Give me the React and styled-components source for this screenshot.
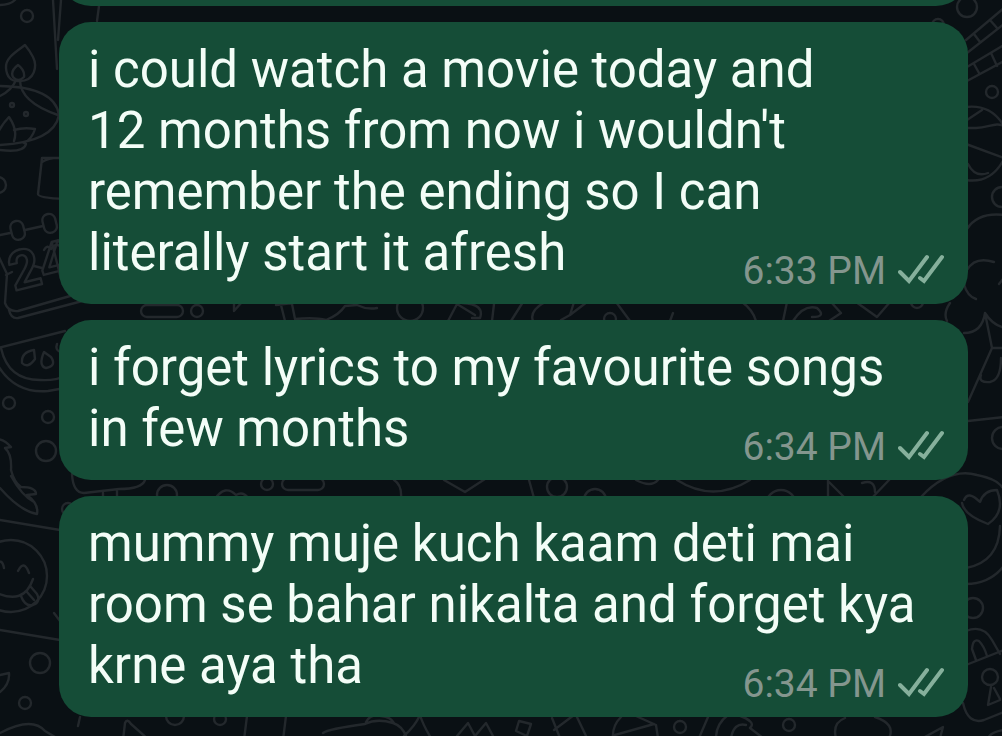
import React from "react";
import styled, { createGlobalStyle } from "styled-components";

const GlobalStyle = createGlobalStyle`
  * { box-sizing: border-box; }
  body { margin: 0; background: #0a1014; }
`;

const Screen = styled.main`
  position: relative;
  display: flex;
  flex-direction: column;
  justify-content: flex-end;
  height: 100vh;
  overflow: hidden;
  background: #0a1014;
  font-family: Roboto, "Liberation Sans", sans-serif;
`;

const Doodles = styled.svg`
  position: absolute;
  top: 0;
  left: 0;
  width: 100%;
  height: 100%;
  fill: none;
  stroke: #23282c;
  stroke-width: 2.4;
  stroke-linecap: round;
  stroke-linejoin: round;
`;

const Thread = styled.ol`
  position: relative;
  display: flex;
  flex-direction: column;
  flex-shrink: 0;
  gap: 16px;
  margin: 0;
  padding: 0 34px 19px 59px;
  list-style: none;
`;

const Bubble = styled.li`
  min-height: 100px;
  padding: 17px 24px 21px 29px;
  border-radius: 32px;
  background: #154d37;
  color: #f3fdf7;
  font-size: 51px;
  line-height: 61px;
`;

const Line = styled.div`
  white-space: nowrap;
`;

const LastRow = styled.div`
  display: flex;
  align-items: flex-start;
  justify-content: space-between;
  height: 61px;
`;

const Meta = styled.div`
  display: flex;
  align-items: center;
  gap: 12px;
  margin-top: 26px;
  color: #84968e;
  font-size: 39px;
  line-height: 46px;
`;

const Ticks = styled.svg`
  width: 46px;
  height: 30px;
  margin-bottom: 4px;
  fill: none;
  stroke: #86b09c;
  stroke-width: 4;
  stroke-linecap: round;
`;

const messages = [
  {
    lines: [
      "i could watch a movie today and",
      "12 months from now i wouldn't",
      "remember the ending so I can",
      "literally start it afresh",
    ],
    time: "6:33 PM",
  },
  {
    lines: ["i forget lyrics to my favourite songs", "in few months"],
    time: "6:34 PM",
  },
  {
    lines: [
      "mummy muje kuch kaam deti mai",
      "room se bahar nikalta and forget kya",
      "krne aya tha",
    ],
    time: "6:34 PM",
  },
];

const rings = [
  [27, 16, 6], [12, 105, 2], [26, 114, 2], [-2, 185, 8],
  [9, 403, 6], [48, 417, 6], [46, 451, 10],
  [40, 663, 10], [25, 703, 6], [68, 509, 6],
  [967, 7, 10], [992, 92, 6], [1002, 197, 10], [1003, 438, 11],
  [973, 608, 10], [197, 311, 6], [410, 308, 13], [167, 495, 10],
  [267, 484, 6], [557, 487, 10], [610, 319, 6], [595, 500, 11],
  [781, 505, 15], [680, 727, 6], [789, 725, 6], [938, 25, 6],
  [175, 716, 9], [220, 719, 6], [917, 302, 6],
];

function Wallpaper() {
  return (
    <Doodles viewBox="0 0 1002 736" preserveAspectRatio="xMinYMin slice" aria-hidden="true">
      {rings.map(([x, y, r]) => (
        <circle key={`${x}-${y}`} cx={x} cy={y} r={r} />
      ))}

      {/* oil lamp */}
      <path d="M25 45 C17 51 5 58 6 68 Q7 81 18 81 C36 82 37 65 33 57 Q30 51 25 45Z" />
      <path d="M18 65 Q10 71 13 77 Q18 83 24 77 Q25 70 18 65Z M16 80 Q12 90 0 96 M20 80 Q20 102 58 115" />
      <path d="M0 86 Q55 87 59 115 Q54 142 0 145 M0 150 Q24 153 26 144 M-3 134 Q3 123 9 117 Q18 130 14 141 M14 130 Q24 127 35 129 Q32 139 24 143" />
      <path d="M0 5 Q10 5 15 0 M53 0 L57 69 M61 0 L58 40 M99 6 L97 21" />

      {/* gift box and beads */}
      <path d="M65 158 H42 L38 194 Q38 198 65 199 M42 162 Q50 157 62 158" />
      <path d="M0 235 L10 233 M25 230 L43 226" />
      <rect x="11" y="221" width="13" height="19" rx="6" transform="rotate(-14 17 230)" />
      <rect x="43" y="214" width="13" height="19" rx="6" transform="rotate(-14 49 223)" />

      {/* calendar page */}
      <path d="M-2 255 L7 274 L5 303 Q8 312 18 311 L84 292 M9 310 Q11 319 18 318 L90 299 M6 275 L12 272 M34 266 L42 268" />
      <text x="14" y="291" fontFamily="Roboto, sans-serif" fontSize="54" fontWeight="700" transform="rotate(-14 14 291)">24</text>
      <path d="M44 250 Q47 244 51 249 Q55 243 60 246" />

      {/* watermelon slice */}
      <path d="M-2 348 L65 331 M1 348 Q8 380 40 380 Q55 381 65 376 M-5 360 Q12 394 48 391 L65 388" />
      <path d="M34 350 Q21 352 22 363 Q28 369 35 359Z M44 352 Q38 366 46 368 Q57 366 51 357Z M57 344 Q55 350 60 352" />

      {/* dolphin */}
      <path d="M-2 439 Q5 440 11 447 L5 448 Q12 454 11 470 Q14 482 21 487 Q36 487 36 494 L27 495 Q39 504 37 514 Q20 511 0 488 M11 476 Q22 496 34 502" />
      <path d="M72 474 Q73 493 84 493 L119 489 Q142 489 145 480 M103 493 V501 M117 491 V502" />

      {/* smiling face */}
      <path d="M0 520 L60 530 M0 630 L60 640 M54 613 L60 621" />
      <circle cx="11" cy="576" r="36" />
      <path d="M-5 565 Q2 557 4 568 M18 571 Q24 559 29 573 M-5 592 Q24 606 33 579 M21 596 Q25 607 33 605 Q41 602 37 594 L31 587 M27 592 L34 600" />
      <path d="M0 692 Q10 684 9 673 L0 675 M0 733 Q32 716 45 731 L60 740 M80 717 L78 726" />

      {/* between the first and second bubbles */}
      <rect x="141" y="305" width="42" height="12" rx="6" />
      <path d="M234 302 V311 L242 302 M276 305 L293 303 M281 305 L285 321 M292 304 L295 319 Q315 317 326 320 Q339 315 345 306 L357 305 Q367 310 377 308" />
      <path d="M448 321 L457 304 L475 315 M462 303 Q485 304 480 318 L472 318 M494 304 L492 321 M523 302 L511 321 M545 302 Q529 311 533 321" />
      <path d="M574 302 L570 315 L561 320 M587 302 L570 315 M616 302 L630 321 M673 313 L670 321 M742 302 Q753 310 756 321 M787 302 L783 321 M793 321 Q804 304 817 308 Q827 317 812 317 M831 302 L841 313 L829 321 M856 302 L877 317 L890 302" />

      {/* between the second and third bubbles */}
      <path d="M394 480 Q402 485 401 498 M444 480 L465 492 L485 479 M529 480 L534 498 M636 480 Q651 488 658 480 M677 480 Q713 503 750 480 M828 479 V497 M829 482 L844 497 M862 483 Q875 479 875 492 M890 479 L870 500" />
      <rect x="282" y="478" width="42" height="12" rx="6" />
      <path d="M215 499 Q225 484 236 495 Q243 491 248 498" />

      {/* film strip and ball */}
      <path d="M966 40 L1004 8 M967 53 L1004 24 M974 34 L980 42 M990 20 L997 28 M967 67 L1004 45 M967 81 L1004 61 M974 64 L979 73 M991 53 L997 66" />
      <path d="M966 107 Q991 104 1004 126 M967 120 L982 110 M967 128 H976 C990 127 996 122 1004 126 M966 144 L1004 158 M966 180 Q991 184 1004 159 M968 164 Q975 178 988 173 M967 229 Q978 212 1004 215" />

      {/* blossom and megaphone */}
      <path d="M967 270 Q975 256 994 262 M964 284 Q967 296 976 299 M950 303 Q943 313 947 321 M999 284 L1003 279 M964 333 Q982 333 985 313 L992 348 H1004 M985 313 Q992 324 1002 327 M992 348 L968 402 M968 421 L1004 417 M981 375 Q978 383 990 382 Q1001 380 1001 358" />

      {/* heart badge and padlock */}
      <path d="M921 497 Q949 467 977 475 Q997 479 1002 487 M964 500 Q968 490 980 502 Q984 490 997 490 Q1006 512 988 524 Q964 515 962 503 M1000 526 Q999 562 966 568 M1003 567 Q989 584 966 584" />
      <path d="M966 631 Q983 624 992 640 L1000 654 M976 660 L972 649 Q973 638 979 641 Q984 646 987 656 M966 665 L1004 650 M991 687 L988 705 L1000 700 M994 688 L1000 699" />
      <circle cx="990" cy="677" r="8" />
      <path d="M963 703 Q968 725 984 720 L1004 712 M988 738 Q991 732 1004 730" />

      {/* below the last bubble */}
      <path d="M123 740 L125 723 Q127 718 131 724 L149 740 M247 716 L244 740 M286 716 L283 740 M323 733 Q328 729 365 724 Q377 718 393 723 Q402 726 406 736 M366 722 Q371 713 381 716 Q391 717 394 723 M404 736 Q415 726 420 715 Q423 725 431 738 M457 736 L468 723 L475 736 L486 723 L493 736" />
      <path d="M519 721 L531 724 L527 736 L516 731Z M552 718 L560 738 M574 715 L554 730 M576 715 L587 738 M621 717 Q612 726 613 738 M654 724 L615 735 M636 716 L656 725 L658 738 M708 717 L699 738 M728 715 Q716 724 716 738 M738 715 Q757 722 750 728 L763 738 M731 738 Q734 722 746 725 M845 718 Q832 723 836 738 M875 717 Q896 724 889 738 M923 738 L943 727 L940 738" />
    </Doodles>
  );
}

function DeliveredTicks() {
  return (
    <Ticks viewBox="0 0 46 30" role="img" aria-label="Delivered">
      <path d="M2 18 L11 27 L29 3" />
      <path d="M22 24 L26 27 L44 3" />
    </Ticks>
  );
}

function Message({ lines, time }) {
  return (
    <Bubble>
      {lines.slice(0, -1).map((line) => (
        <Line key={line}>{line}</Line>
      ))}
      <LastRow>
        <Line>{lines[lines.length - 1]}</Line>
        <Meta>
          <time>{time}</time>
          <DeliveredTicks />
        </Meta>
      </LastRow>
    </Bubble>
  );
}

export default function App() {
  return (
    <>
      <GlobalStyle />
      <Screen>
        <Wallpaper />
        <Thread>
          <Bubble aria-hidden="true" />
          {messages.map((message) => (
            <Message key={message.lines[0]} {...message} />
          ))}
        </Thread>
      </Screen>
    </>
  );
}
